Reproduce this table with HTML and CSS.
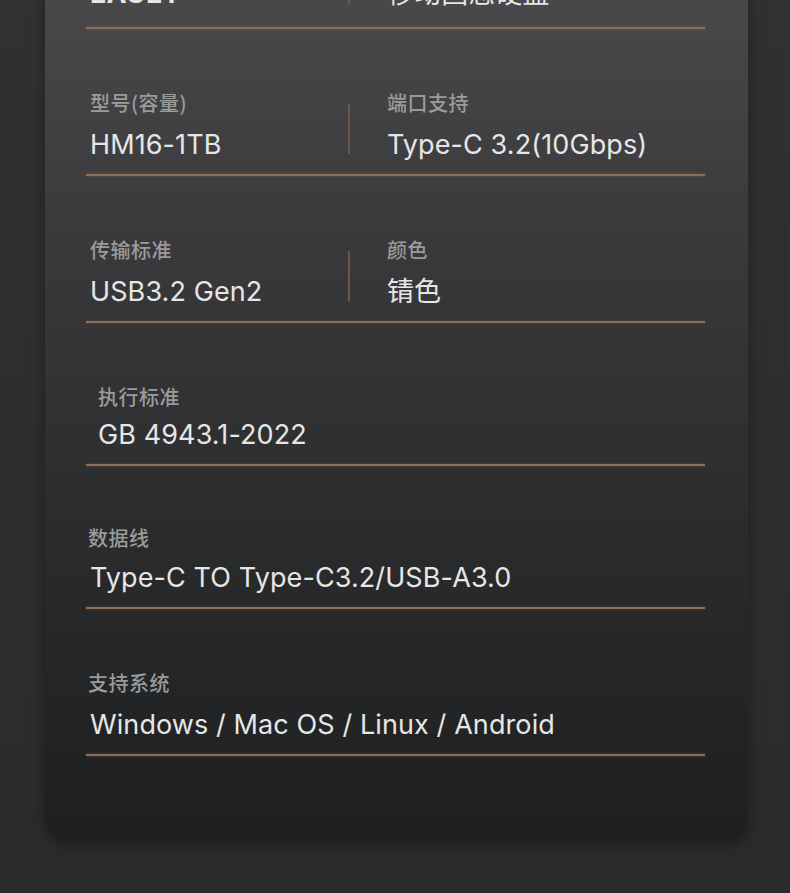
FILE: index.html
```html
<!DOCTYPE html>
<html lang="zh-CN">
<head>
<meta charset="utf-8">
<title>参数</title>
<link rel="stylesheet" href="styles.css">
</head>
<body>
<div class="page">
  <section class="card">
    <div class="row row-first">
      <div class="cell cell-left">
        <div class="value value-bold">EAGET</div>
      </div>
      <div class="divider divider-first"></div>
      <div class="cell cell-right">
        <div class="value">移动固态硬盘</div>
      </div>
    </div>
    <div class="rule"></div>

    <div class="row row-a">
      <div class="cell cell-left">
        <div class="label">型号(容量)</div>
        <div class="value">HM16-1TB</div>
      </div>
      <div class="divider"></div>
      <div class="cell cell-right">
        <div class="label">端口支持</div>
        <div class="value">Type-C 3.2(10Gbps)</div>
      </div>
    </div>
    <div class="rule"></div>

    <div class="row row-a">
      <div class="cell cell-left">
        <div class="label">传输标准</div>
        <div class="value">USB3.2 Gen2</div>
      </div>
      <div class="divider"></div>
      <div class="cell cell-right">
        <div class="label">颜色</div>
        <div class="value">锖色</div>
      </div>
    </div>
    <div class="rule"></div>

    <div class="row row-single row-inset">
      <div class="cell">
        <div class="label">执行标准</div>
        <div class="value value-tight">GB 4943.1-2022</div>
      </div>
    </div>
    <div class="rule"></div>

    <div class="row row-single row-b">
      <div class="cell">
        <div class="label label-out">数据线</div>
        <div class="value value-mid">Type-C TO Type-C3.2/USB-A3.0</div>
      </div>
    </div>
    <div class="rule"></div>

    <div class="row row-single row-a">
      <div class="cell">
        <div class="label label-out">支持系统</div>
        <div class="value">Windows / Mac OS / Linux / Android</div>
      </div>
    </div>
    <div class="rule"></div>
  </section>
</div>
</body>
</html>
```

FILE: styles.css
```css
html, body {
  margin: 0;
  padding: 0;
}

body {
  width: 790px;
  height: 893px;
  overflow: hidden;
  background: linear-gradient(180deg, #303133 0%, #2c2d2f 60%, #2a2b2d 100%);
  font-family: "Noto Sans CJK SC", "Noto Sans", sans-serif;
}

.page {
  padding: 0 42px 0 45px;
}

.card {
  margin-top: -25px;
  padding: 0 43px 82px 41px;
  background: linear-gradient(180deg, #4a4a4c 0%, #3a3a3c 30%, #2a2b2d 65%, #1e1f21 100%);
  border-radius: 0 0 20px 20px;
  box-shadow: 0 6px 14px rgba(0, 0, 0, 0.35);
}

.row {
  display: grid;
  grid-template-columns: 258px 2px 1fr;
  align-items: center;
  padding: 63px 0 14px 4px;
}

.row-a {
  padding-top: 64px;
}

.row-b {
  padding-top: 62px;
}

.row-first {
  padding-top: 0;
}

.row-single {
  display: block;
}

.row-inset {
  padding-top: 64px;
  padding-left: 12px;
}

.cell-right {
  padding-left: 37px;
}

.label {
  font-size: 20px;
  line-height: 20px;
  font-weight: 500;
  color: #9b9b9b;
  letter-spacing: 0.5px;
}

.label-out {
  margin-left: -2px;
}

.value {
  margin-top: 17px;
  font-family: "Inter", "Noto Sans CJK SC", sans-serif;
  font-size: 27px;
  line-height: 30px;
  color: #e6e6e6;
  letter-spacing: 0.1px;
}

.row-first .value {
  margin-top: 0;
}

.value-bold {
  font-weight: 700;
}

.value-tight {
  margin-top: 13px;
}

.value-mid {
  margin-top: 15px;
}

.divider {
  align-self: end;
  width: 2px;
  height: 50px;
  margin-bottom: 6px;
  background: #6f5647;
}

.divider-first {
  height: 30px;
  margin-bottom: 8px;
}

.rule {
  height: 2px;
  background: #8e6d58;
  box-shadow: 0 0 3px rgba(150, 105, 75, 0.55);
}
```
